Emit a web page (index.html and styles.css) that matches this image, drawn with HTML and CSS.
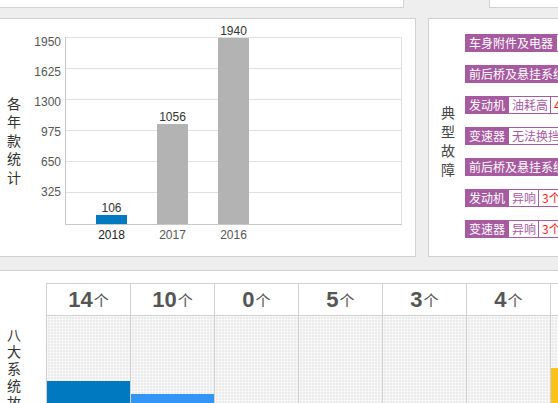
FILE: index.html
```html
<!DOCTYPE html>
<html lang="zh">
<head>
<meta charset="utf-8">
<title>统计</title>
<link rel="stylesheet" href="styles.css">
</head>
<body>
<div class="page">
  <div class="row row1">
    <div class="panel p-a"></div>
    <div class="panel p-b"></div>
  </div>
  <div class="row row2">
    <div class="panel p-chart">
      <div class="vlabel vl-chart">各年款统计</div>
      <svg class="chart" width="386" height="237" viewBox="28 19 386 237">
        <path class="grid" d="M65 37.5H401M65 68.5H401M65 99.5H401M65 130.5H401M65 161.5H401M65 192.5H401M401.5 37V224"/>
        <path class="axis" d="M65.5 37V225M65 224.5H402"/>
        <rect x="96" y="215" width="31" height="9" fill="#0079c1"/>
        <rect x="157" y="124" width="31" height="100" fill="#b3b3b3"/>
        <rect x="218" y="38" width="31" height="186" fill="#b3b3b3"/>
        <text class="val" x="111.5" y="212">106</text>
        <text class="val" x="172.5" y="121">1056</text>
        <text class="val" x="233.5" y="35">1940</text>
        <text class="xl xl-on" x="111.5" y="239">2018</text>
        <text class="xl" x="172.5" y="239">2017</text>
        <text class="xl" x="233.5" y="239">2016</text>
        <text class="yl" x="61" y="46">1950</text>
        <text class="yl" x="61" y="76">1625</text>
        <text class="yl" x="61" y="106">1300</text>
        <text class="yl" x="61" y="136">975</text>
        <text class="yl" x="61" y="166">650</text>
        <text class="yl" x="61" y="196">325</text>
      </svg>
    </div>
    <div class="panel p-fault">
      <div class="vlabel vl-fault">典型故障</div>
      <div class="tags">
        <div class="tag"><span class="t-main">车身附件及电器</span><span class="t-sub">异响</span></div>
        <div class="tag"><span class="t-main">前后桥及悬挂系统</span><span class="t-sub">异响</span></div>
        <div class="tag"><span class="t-main">发动机</span><span class="t-sub">油耗高</span><span class="t-sub t-num">4个</span></div>
        <div class="tag"><span class="t-main">变速器</span><span class="t-sub">无法换挡</span><span class="t-sub t-num">2个</span></div>
        <div class="tag"><span class="t-main">前后桥及悬挂系统</span><span class="t-sub">异响</span></div>
        <div class="tag"><span class="t-main">发动机</span><span class="t-sub">异响</span><span class="t-sub t-num">3个</span></div>
        <div class="tag"><span class="t-main">变速器</span><span class="t-sub">异响</span><span class="t-sub t-num">3个</span></div>
      </div>
    </div>
  </div>
  <div class="panel p-sys">
    <div class="vlabel vl-sys">八大系统故障统计</div>
    <div class="sys-table">
      <div class="col"><div class="hd"><b>14</b>个</div><div class="bd"><div class="bar c1" style="height:55px"></div></div></div>
      <div class="col"><div class="hd"><b>10</b>个</div><div class="bd"><div class="bar c2" style="height:42px"></div></div></div>
      <div class="col"><div class="hd"><b>0</b>个</div><div class="bd"><div class="bar c3" style="height:0px"></div></div></div>
      <div class="col"><div class="hd"><b>5</b>个</div><div class="bd"><div class="bar c4" style="height:21px"></div></div></div>
      <div class="col"><div class="hd"><b>3</b>个</div><div class="bd"><div class="bar c5" style="height:13px"></div></div></div>
      <div class="col"><div class="hd"><b>4</b>个</div><div class="bd"><div class="bar c6" style="height:17px"></div></div></div>
      <div class="col"><div class="hd"><b>17</b>个</div><div class="bd"><div class="bar c7" style="height:68px"></div></div></div>
    </div>
  </div>
</div>
</body>
</html>
```
FILE: styles.css
```css
html, body {
  margin: 0;
  padding: 0;
}
body {
  background: #eeeeee;
  width: 558px;
  height: 403px;
  overflow: hidden;
  font-family: "Liberation Sans", "Noto Sans CJK SC", sans-serif;
}
.page {
  width: 558px;
}
.row {
  display: flex;
}
.panel {
  background: #fff;
  border: 1px solid #d0d0d0;
  box-sizing: border-box;
}
.row1 {
  height: 8px;
  gap: 85px;
}
.p-a {
  width: 404px;
  border-top: 0;
  border-left: 0;
}
.p-b {
  flex: 1;
  border-top: 0;
  border-right: 0;
}
.row2 {
  margin-top: 10px;
  height: 239px;
  gap: 12px;
}
.p-chart {
  width: 416px;
  border-left: 0;
  display: flex;
  align-items: flex-start;
}
.vlabel {
  font-family: "Noto Sans CJK SC", sans-serif;
  font-size: 14px;
  width: 14px;
  flex: none;
}
.vl-chart {
  margin: 75px 0 0 7px;
  line-height: 18.4px;
  color: #333;
}
.chart {
  display: block;
  margin-left: 7px;
  flex: none;
}
.chart .grid {
  stroke: #e0e0e0;
  stroke-width: 1;
  fill: none;
}
.chart .axis {
  stroke: #c8c8c8;
  stroke-width: 1;
  fill: none;
}
.chart text {
  font-family: "Liberation Sans", sans-serif;
  font-size: 12px;
}
.chart .val {
  fill: #333;
  text-anchor: middle;
}
.chart .xl {
  fill: #555;
  text-anchor: middle;
}
.chart .xl-on {
  fill: #222;
}
.chart .yl {
  fill: #555;
  text-anchor: end;
}
.p-fault {
  flex: 1;
  border-right: 0;
  display: flex;
  align-items: flex-start;
  padding-left: 12px;
  overflow: hidden;
}
.vl-fault {
  margin-top: 84px;
  line-height: 19px;
  color: #444;
}
.tags {
  margin: 15px 0 0 10px;
  display: flex;
  flex-direction: column;
  align-items: flex-start;
  gap: 13px;
  flex: none;
}
.tag {
  display: flex;
  height: 18px;
  box-sizing: border-box;
  border: 1px solid #a65a9f;
  font-family: "Noto Sans CJK SC", sans-serif;
  font-size: 12px;
  line-height: 16px;
  white-space: nowrap;
  background: #fff;
}
.t-main {
  background: #a65a9f;
  color: #fff;
  padding: 0 3px;
}
.t-sub {
  color: #a65a9f;
  padding: 0 2px 0 3px;
  border-left: 1px solid #a65a9f;
}
.t-num {
  color: #ff1a1a;
}
.p-sys {
  margin-top: 13px;
  height: 200px;
  border-left: 0;
  border-right: 0;
  border-bottom: 0;
  display: flex;
  align-items: flex-start;
  overflow: hidden;
}
.vl-sys {
  margin: 55px 0 0 7px;
  line-height: 17px;
  color: #333;
}
.sys-table {
  margin: 12px 0 0 25px;
  display: flex;
  border-left: 1px solid #d0d0d0;
  border-top: 1px solid #d0d0d0;
  flex: none;
}
.col {
  width: 84px;
  box-sizing: border-box;
  border-right: 1px solid #d0d0d0;
  display: flex;
  flex-direction: column;
}
.hd {
  height: 32px;
  box-sizing: border-box;
  border-bottom: 1px solid #d0d0d0;
  display: flex;
  align-items: center;
  justify-content: center;
  color: #555;
  font-family: "Noto Sans CJK SC", sans-serif;
  font-size: 15px;
  line-height: 31px;
}
.hd b {
  font-family: "Liberation Sans", sans-serif;
  font-size: 22px;
  font-weight: bold;
  margin-right: 1px;
}
.bd {
  height: 120px;
  display: flex;
  flex-direction: column;
  justify-content: flex-end;
  background-color: #ebebeb;
  background-image:
    linear-gradient(90deg, rgba(255,255,255,0.55) 1px, transparent 1px),
    linear-gradient(rgba(255,255,255,0.55) 1px, transparent 1px);
  background-size: 3px 3px;
}
.bar {
  width: 100%;
}
.c1 { background: #0079c1; }
.c2 { background: #3395f5; }
.c3 { background: #5cb85c; }
.c4 { background: #8e6cc4; }
.c5 { background: #e5603c; }
.c6 { background: #35b6b0; }
.c7 { background: #f9c21c; }
```
